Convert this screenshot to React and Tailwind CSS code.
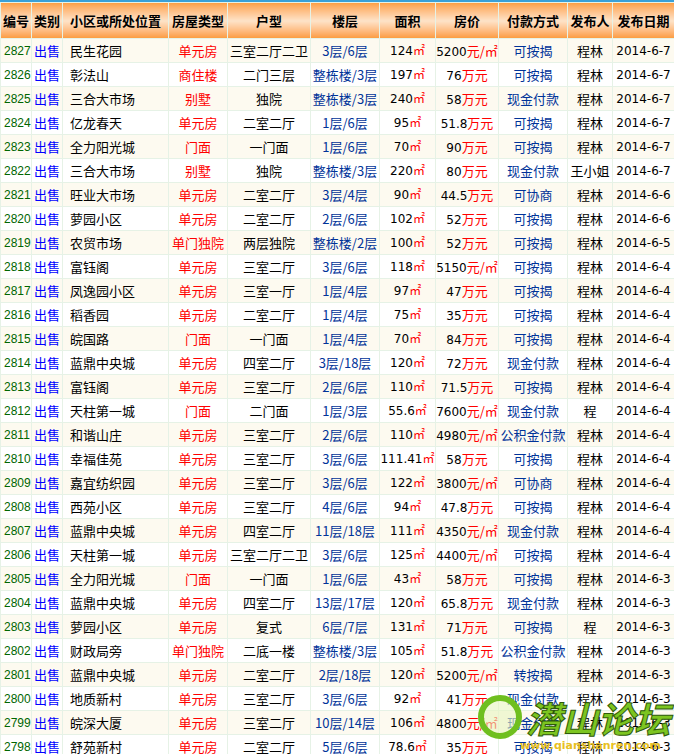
const raw = `2827|民生花园|单元房|三室二厅二卫|3层/6层|124|5200|p|可按揭|程林|2014-6-7
2826|彰法山|商住楼|二门三层|整栋楼/3层|197|76|w|可按揭|程林|2014-6-7
2825|三合大市场|别墅|独院|整栋楼/3层|240|58|w|现金付款|程林|2014-6-7
2824|亿龙春天|单元房|二室二厅|1层/6层|95|51.8|w|可按揭|程林|2014-6-7
2823|全力阳光城|门面|一门面|1层/6层|70|90|w|可按揭|程林|2014-6-7
2822|三合大市场|别墅|独院|整栋楼/3层|220|80|w|现金付款|王小姐|2014-6-7
2821|旺业大市场|单元房|二室二厅|3层/4层|90|44.5|w|可协商|程林|2014-6-6
2820|萝园小区|单元房|二室二厅|2层/6层|102|52|w|可按揭|程林|2014-6-6
2819|农贸市场|单门独院|两层独院|整栋楼/2层|100|52|w|可按揭|程林|2014-6-5
2818|富钰阁|单元房|三室二厅|3层/6层|118|5150|p|可按揭|程林|2014-6-4
2817|凤逸园小区|单元房|三室一厅|1层/4层|97|47|w|可按揭|程林|2014-6-4
2816|稻香园|单元房|二室二厅|1层/4层|75|35|w|可按揭|程林|2014-6-4
2815|皖国路|门面|一门面|1层/4层|70|84|w|可按揭|程林|2014-6-4
2814|蓝鼎中央城|单元房|四室二厅|3层/18层|120|72|w|现金付款|程林|2014-6-4
2813|富钰阁|单元房|三室二厅|2层/6层|110|71.5|w|可按揭|程林|2014-6-4
2812|天柱第一城|门面|二门面|1层/3层|55.6|7600|p|现金付款|程|2014-6-4
2811|和谐山庄|单元房|三室二厅|2层/6层|110|4980|p|公积金付款|程林|2014-6-4
2810|幸福佳苑|单元房|三室二厅|3层/6层|111.41|58|w|可按揭|程林|2014-6-4
2809|嘉宜纺织园|单元房|三室二厅|3层/6层|122|3800|p|可协商|程林|2014-6-4
2808|西苑小区|单元房|三室二厅|4层/6层|94|47.8|w|可按揭|程林|2014-6-4
2807|蓝鼎中央城|单元房|四室二厅|11层/18层|111|4350|p|现金付款|程林|2014-6-4
2806|天柱第一城|单元房|三室二厅二卫|3层/6层|125|4400|p|可按揭|程林|2014-6-4
2805|全力阳光城|门面|一门面|1层/6层|43|58|w|可按揭|程林|2014-6-3
2804|蓝鼎中央城|单元房|四室二厅|13层/17层|120|65.8|w|现金付款|程林|2014-6-3
2803|萝园小区|单元房|复式|6层/7层|131|71|w|可按揭|程|2014-6-3
2802|财政局旁|单门独院|二底一楼|整栋楼/3层|105|51.8|w|公积金付款|程林|2014-6-3
2801|蓝鼎中央城|单元房|二室二厅|2层/18层|120|5200|p|转按揭|程林|2014-6-3
2800|地质新村|单元房|三室二厅|3层/6层|92|41|w|现金付款|程林|2014-6-3
2799|皖深大厦|单元房|三室二厅|10层/14层|106|4800|p|现金付款|程林|2014-6-3
2798|舒苑新村|单元房|二室二厅|5层/6层|78.6|35|w|可按揭|程林|2014-6-3`;
const rows = raw.split("\n").map((l) => l.split("|"));
const widths = [31, 31, 106, 59, 83, 69, 56, 63, 69, 45, 62];
const heads = ["编号", "类别", "小区或所处位置", "房屋类型", "户型", "楼层", "面积", "房价", "付款方式", "发布人", "发布日期"];
const cjk = { fontFamily: '"Noto Sans CJK SC", "Liberation Sans", sans-serif' };
const num = { fontFamily: '"DejaVu Sans", "Noto Sans CJK SC", sans-serif' };
const narrow = { fontFamily: '"Liberation Sans", "Noto Sans CJK SC", sans-serif' };

export default function App() {
  return (
    <div className="relative w-[674px] h-[754px] overflow-hidden bg-white" style={cjk}>
      <div className="h-[2px] bg-[#3aa0d8]" />
      <table className="border-collapse table-fixed w-[674px] text-[13px]">
        <colgroup>
          {widths.map((w, i) => <col key={i} style={{ width: w }} />)}
        </colgroup>
        <thead>
          <tr className="h-[36px]">
            {heads.map((h, i) => (
              <th key={i} className="border border-[#e6f2e6] font-bold text-black text-[13px] whitespace-nowrap bg-gradient-to-b from-[#fda24a] via-[#fde3c8] to-[#fb9a3a] px-0">
                {h}
              </th>
            ))}
          </tr>
        </thead>
        <tbody>
          {rows.map((r, i) => (
            <tr key={i} className={"h-[24px] " + (i % 2 === 0 ? "bg-[#fdfaf0]" : "bg-white")}>
              <td className="border border-[#e6f2e6] pl-[3px] text-[#006600] text-[12px]" style={narrow}>{r[0]}</td>
              <td className="border border-[#e6f2e6] text-center text-[#0000ff]">出售</td>
              <td className="border border-[#e6f2e6] pl-[7px] text-black whitespace-nowrap">{r[1]}</td>
              <td className="border border-[#e6f2e6] text-center text-[#ff0000] whitespace-nowrap">{r[2]}</td>
              <td className="border border-[#e6f2e6] text-center text-black whitespace-nowrap">{r[3]}</td>
              <td className="border border-[#e6f2e6] text-center text-[#003399] whitespace-nowrap">{r[4]}</td>
              <td className="border border-[#e6f2e6] text-center text-black text-[12px] whitespace-nowrap" style={num}>
                {r[5]}<span className="text-[#ff0000]">㎡</span>
              </td>
              <td className="border border-[#e6f2e6] text-center text-black text-[12px] whitespace-nowrap" style={num}>
                {r[6]}<span className="text-[#ff0000] text-[13px]" style={cjk}>{r[7] === "p" ? "元/㎡" : "万元"}</span>
              </td>
              <td className="border border-[#e6f2e6] text-center text-[#003399] whitespace-nowrap">{r[8]}</td>
              <td className="border border-[#e6f2e6] text-center text-black whitespace-nowrap">{r[9]}</td>
              <td className="border border-[#e6f2e6] text-center text-black text-[12px] whitespace-nowrap" style={num}>{r[10]}</td>
            </tr>
          ))}
        </tbody>
      </table>
      <div className="absolute left-[478px] top-[695px] flex items-center gap-1 pointer-events-none">
        <div className="w-[44px] h-[44px] rounded-full border-[6px] border-[#6fbf1f] bg-[#e8f5c0]/60" />
        <span className="text-[36px] font-bold italic text-[#7cc520] leading-none" style={{ WebkitTextStroke: "1px #2f5a0a" }}>潜山论坛</span>
      </div>
      <div className="absolute left-[520px] top-[738px] text-[11px] font-bold text-[#e8c020] pointer-events-none" style={num}>www.qianshanren.com</div>
    </div>
  );
}
